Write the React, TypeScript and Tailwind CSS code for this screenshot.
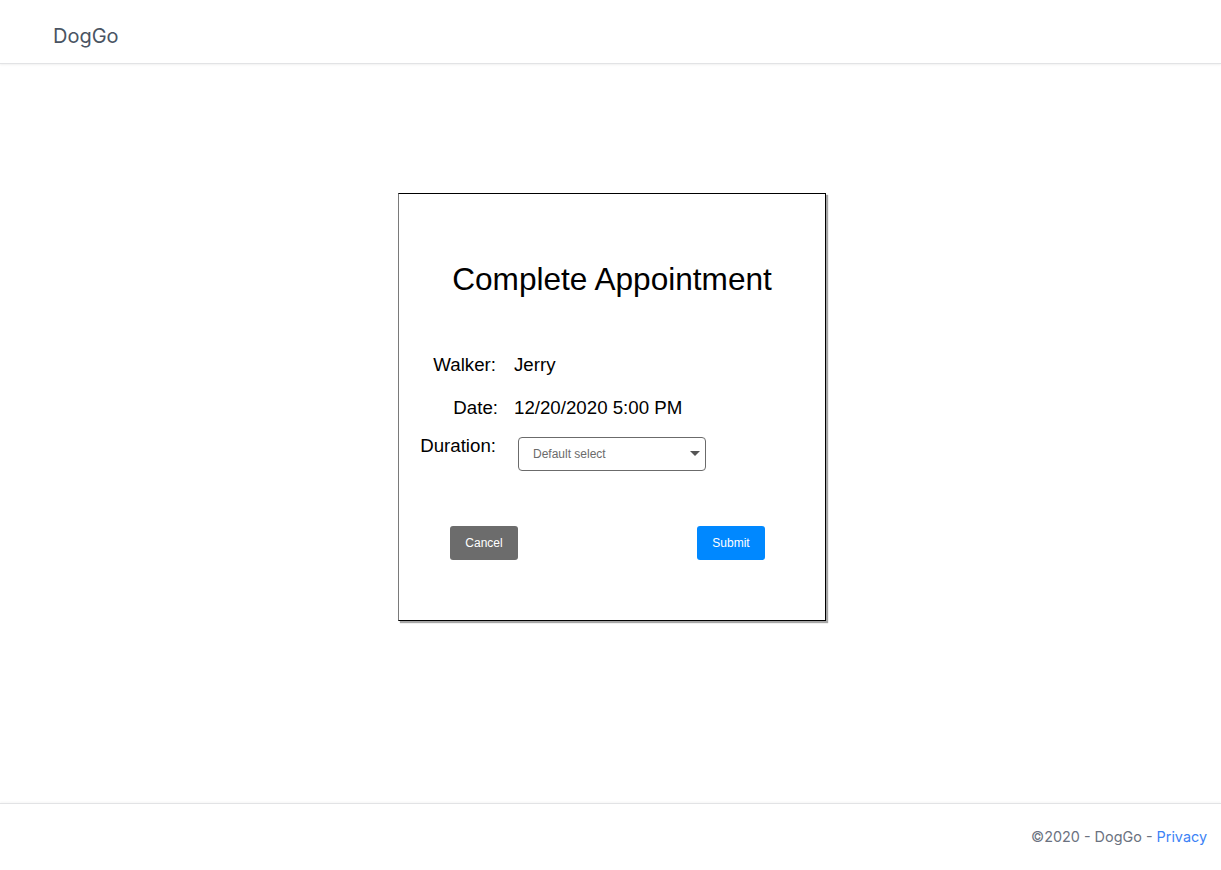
import React from "react";

export default function App() {
  return (
    <div className="min-h-[870px] flex flex-col bg-white" style={{ fontFamily: "Inter, 'Noto Sans', sans-serif" }}>
      <header className="h-[64px] flex items-center pt-[9px] px-[53px] border-b border-[#e2e3e5] shadow-[0_1px_2px_rgba(0,0,0,0.06)]">
        <span className="text-[20px] text-[#4a5463]">DogGo</span>
      </header>
      <main className="flex-1 flex justify-center pt-[129px] pl-[3px]">
        <div
          className="w-[428px] h-[428px] bg-white border border-black border-l-[#7a7a7a] shadow-[2px_2px_1px_rgba(0,0,0,0.35)] flex flex-col"
          style={{ fontFamily: "'Liberation Sans', Arial, sans-serif" }}
        >
          <h1 className="mt-[67px] text-center text-[31.6px] leading-[36px] text-black">Complete Appointment</h1>
          <div className="mt-[56px] grid grid-cols-[97px_1fr] gap-x-[18px] text-[18.7px] leading-[24px] text-black">
            <div className="text-right">Walker:</div>
            <div>Jerry</div>
            <div className="text-right mt-[19px]"><span className="relative left-[2px]">Date:</span></div>
            <div className="mt-[19px]">12/20/2020 5:00 PM</div>
            <div className="text-right mt-[14px]">Duration:</div>
            <div className="mt-[14px] pl-[4px]">
              <div className="relative w-[188px] h-[34px] border border-[#6b6b6b] rounded-[4px] mt-[3px] flex items-center">
                <span className="pl-[14px] text-[12px] text-[#6b6b6b]">Default select</span>
                <svg className="absolute right-[5px] top-[13px]" width="10" height="6" viewBox="0 0 10 6">
                  <path d="M0 0 L10 0 L5 5 Z" fill="#555" />
                </svg>
              </div>
            </div>
          </div>
          <div className="mt-[55px] flex justify-between pl-[51px] pr-[60px]">
            <button className="w-[68px] h-[34px] rounded-[3px] bg-[#6c6c6c] text-white text-[12px] font-medium">Cancel</button>
            <button className="w-[68px] h-[34px] rounded-[3px] bg-[#0088ff] text-white text-[12px] font-medium">Submit</button>
          </div>
        </div>
      </main>
      <footer className="h-[67px] border-t border-[#e2e3e5] shadow-[0_-1px_2px_rgba(0,0,0,0.04)] flex items-center justify-end pr-[14px]">
        <span className="text-[14.4px] text-[#6b7280]">
          ©2020 - DogGo - <a className="text-[#3b82f6]">Privacy</a>
        </span>
      </footer>
    </div>
  );
}
